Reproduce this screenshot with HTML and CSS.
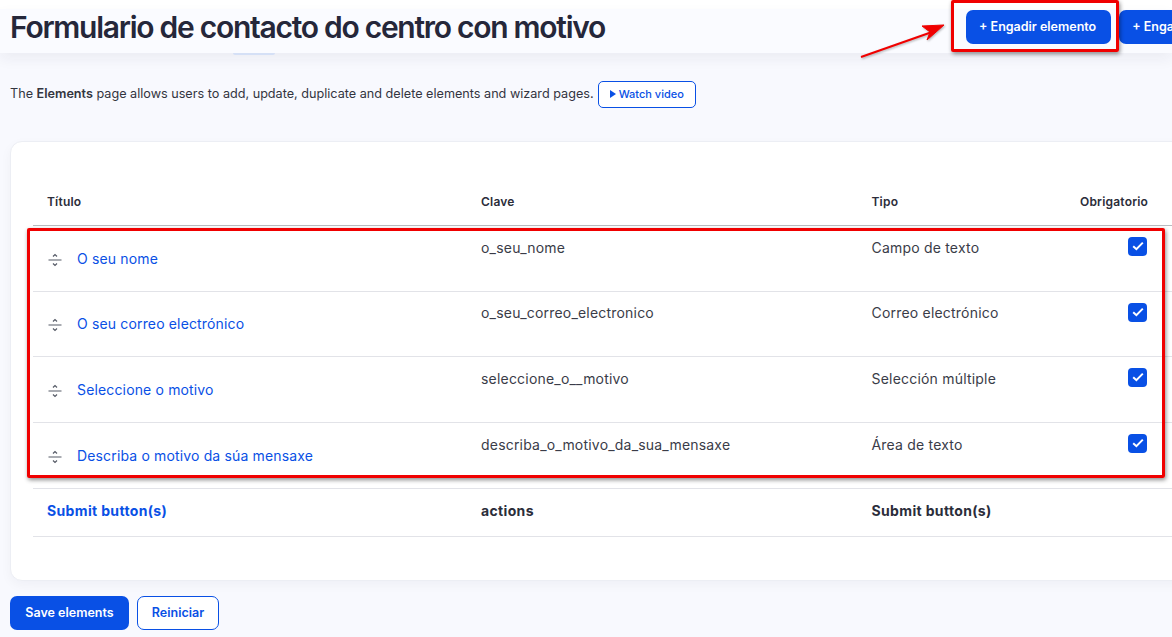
FILE: index.html
```html
<!DOCTYPE html>
<html>
    <head>
        <meta charset="UTF-8">
        <meta name="viewport" content="width=device-width, initial-scale=1.0">
        <title>Formulario de contacto do centro con motivo</title>
        <link rel="stylesheet" href="styles.css">
    </head>

    <body>
        <header class="page-header">
            <h1>Formulario de contacto do centro con motivo</h1>
            <div class="header-actions">
                <a class="btn btn-primary btn-add">+ Engadir elemento</a>
                <a class="btn btn-primary btn-add">+ Enga</a>
            </div>
            <span class="header-tab"></span>
        </header>

        <div class="intro">
            <p>The <b>Elements</b> page allows users to add, update, duplicate and delete elements and wizard pages.</p>
            <a class="btn-video"><span class="play"></span>Watch video</a>
        </div>

        <section class="card">
            <table class="elements">
                <thead>
                    <tr>
                        <th class="col-title">Título</th>
                        <th class="col-key">Clave</th>
                        <th class="col-type">Tipo</th>
                        <th class="col-req">Obrigatorio</th>
                    </tr>
                </thead>
                <tbody>
                    <tr>
                        <td class="title-cell">
                            <div class="title-wrap">
                                <svg class="handle" width="14" height="16" viewBox="0 0 14 16"><path d="M5 4.5 7 2.5 9 4.5M0.5 8h13M5 11.5 7 13.5 9 11.5" fill="none" stroke="#555a66" stroke-width="1.2"/></svg>
                                <a>O seu nome</a>
                            </div>
                        </td>
                        <td>o_seu_nome</td>
                        <td>Campo de texto</td>
                        <td class="req-cell"><span class="check"><svg width="12" height="10" viewBox="0 0 12 10"><path d="M1.2 5.2 4.4 8.2 10.8 1.6" fill="none" stroke="#fff" stroke-width="2"/></svg></span></td>
                    </tr>
                    <tr class="row-short">
                        <td class="title-cell">
                            <div class="title-wrap">
                                <svg class="handle" width="14" height="16" viewBox="0 0 14 16"><path d="M5 4.5 7 2.5 9 4.5M0.5 8h13M5 11.5 7 13.5 9 11.5" fill="none" stroke="#555a66" stroke-width="1.2"/></svg>
                                <a>O seu correo electrónico</a>
                            </div>
                        </td>
                        <td>o_seu_correo_electronico</td>
                        <td>Correo electrónico</td>
                        <td class="req-cell"><span class="check"><svg width="12" height="10" viewBox="0 0 12 10"><path d="M1.2 5.2 4.4 8.2 10.8 1.6" fill="none" stroke="#fff" stroke-width="2"/></svg></span></td>
                    </tr>
                    <tr>
                        <td class="title-cell">
                            <div class="title-wrap">
                                <svg class="handle" width="14" height="16" viewBox="0 0 14 16"><path d="M5 4.5 7 2.5 9 4.5M0.5 8h13M5 11.5 7 13.5 9 11.5" fill="none" stroke="#555a66" stroke-width="1.2"/></svg>
                                <a>Seleccione o motivo</a>
                            </div>
                        </td>
                        <td>seleccione_o__motivo</td>
                        <td>Selección múltiple</td>
                        <td class="req-cell"><span class="check"><svg width="12" height="10" viewBox="0 0 12 10"><path d="M1.2 5.2 4.4 8.2 10.8 1.6" fill="none" stroke="#fff" stroke-width="2"/></svg></span></td>
                    </tr>
                    <tr>
                        <td class="title-cell">
                            <div class="title-wrap">
                                <svg class="handle" width="14" height="16" viewBox="0 0 14 16"><path d="M5 4.5 7 2.5 9 4.5M0.5 8h13M5 11.5 7 13.5 9 11.5" fill="none" stroke="#555a66" stroke-width="1.2"/></svg>
                                <a>Describa o motivo da súa mensaxe</a>
                            </div>
                        </td>
                        <td>describa_o_motivo_da_sua_mensaxe</td>
                        <td>Área de texto</td>
                        <td class="req-cell"><span class="check"><svg width="12" height="10" viewBox="0 0 12 10"><path d="M1.2 5.2 4.4 8.2 10.8 1.6" fill="none" stroke="#fff" stroke-width="2"/></svg></span></td>
                    </tr>
                    <tr class="row-submit">
                        <td><a>Submit button(s)</a></td>
                        <td>actions</td>
                        <td>Submit button(s)</td>
                        <td></td>
                    </tr>
                </tbody>
            </table>
        </section>

        <div class="form-actions">
            <a class="btn btn-primary btn-save">Save elements</a>
            <a class="btn btn-outline">Reiniciar</a>
        </div>

        <!-- annotations drawn over the screenshot -->
        <div class="mark mark-button"></div>
        <div class="mark mark-rows"></div>
        <svg class="arrow" width="100" height="50" viewBox="0 0 100 50">
            <path d="M1 37 72 12" stroke="#f00000" stroke-width="2" fill="none"/>
            <path d="M84 5 62 6 70 12 67 20Z" fill="#f00000" stroke="#f00000"/>
        </svg>
    </body>
</html>
```

FILE: styles.css
```css
body {
    font-family: 'Inter', 'Liberation Sans', sans-serif;
    background: #f8f9fe;
    color: #2b2d3a;
    margin: 0;
    padding: 0;
    width: 1172px;
    height: 637px;
    overflow: hidden;
    position: relative;
    font-size: 14px;
}
a {
    color: #0950e5;
    text-decoration: none;
}
body::before {
    content: "";
    display: block;
    height: 9px;
    background: #fff;
}
.page-header {
    height: 44px;
    display: flex;
    justify-content: space-between;
    background: #fafbff;
    box-shadow: 0 6px 14px rgba(30, 35, 60, 0.06);
    position: relative;
    padding-left: 10px;
}
.page-header h1 {
    margin: 0;
    font-size: 30px;
    line-height: 37px;
    font-weight: 600;
    letter-spacing: -1.27px;
    color: #25273a;
    white-space: nowrap;
}
.header-tab {
    position: absolute;
    left: 233px;
    top: 44px;
    width: 42px;
    height: 2px;
    border-radius: 0 0 4px 4px;
    background: #d5e0f6;
}
.header-actions {
    display: flex;
    gap: 8px;
    flex: none;
    width: 206px;
    margin-top: 1px;
    overflow: hidden;
    white-space: nowrap;
}
.btn {
    display: inline-flex;
    align-items: center;
    justify-content: center;
    box-sizing: border-box;
    border-radius: 7px;
    font-weight: 600;
    font-size: 13px;
    padding-bottom: 1px;
    white-space: nowrap;
}
.btn-primary {
    background: #0950e5;
    color: #fff;
}
.btn-add {
    height: 34px;
    padding: 0 15px 2px 13px;
    flex: none;
    font-size: 12.5px;
}
.intro {
    margin: 28px 0 0 10px;
    height: 27px;
    display: flex;
    align-items: center;
    gap: 4px;
    font-size: 12.65px;
    color: #33353f;
    white-space: nowrap;
}
.intro p {
    margin: 0 0 3px;
}
.intro b {
    font-weight: 600;
}
.btn-video {
    display: inline-flex;
    align-items: center;
    box-sizing: border-box;
    height: 27px;
    width: 98px;
    padding: 0 0 2px 11px;
    background: #fff;
    border: 1px solid #0950e5;
    border-radius: 5px;
    font-size: 11px;
    font-weight: 500;
}
.play {
    width: 0;
    height: 0;
    margin-right: 3px;
    border-left: 6px solid #0950e5;
    border-top: 4px solid transparent;
    border-bottom: 4px solid transparent;
}
.card {
    box-sizing: border-box;
    margin: 33px 0 0 10px;
    width: 1200px;
    height: 440px;
    padding: 30px 0 0 22px;
    background: #fff;
    border: 1px solid #eceef4;
    border-radius: 12px;
    box-shadow: 0 4px 12px rgba(30, 35, 60, 0.04);
}
.elements {
    border-collapse: collapse;
    table-layout: fixed;
    width: 1160px;
}
.elements th {
    text-align: left;
    font-size: 12px;
    font-weight: 600;
    letter-spacing: 0.2px;
    height: 53px;
    padding: 7px 0 0 14px;
    box-sizing: border-box;
    border-bottom: 1px solid #b9bbc0;
    color: #2b2d3a;
    vertical-align: middle;
}
.col-title { width: 434px; }
.col-key { width: 390.5px; }
.col-type { width: 208.5px; }
.elements td {
    box-sizing: border-box;
    height: 66px;
    padding: 13px 0 0 14px;
    vertical-align: top;
    line-height: 17px;
    letter-spacing: 0.2px;
    border-bottom: 1px solid #e2e3e8;
    color: #3a3c48;
}
.elements td.title-cell {
    padding-top: 24px;
    letter-spacing: 0.15px;
}
.elements .row-short td {
    height: 65px;
    padding-top: 12px;
}
.elements .row-short td.title-cell {
    padding-top: 23px;
}
.title-wrap {
    display: flex;
    align-items: center;
    gap: 15px;
}
.handle {
    flex: none;
    margin: 2px 0 0 1px;
}
.elements td.req-cell {
    padding: 11px 0 0 62px;
}
.elements .row-short td.req-cell {
    padding-top: 11px;
}
.check {
    display: flex;
    align-items: center;
    justify-content: center;
    width: 19px;
    height: 19px;
    border-radius: 4px;
    background: #0950e5;
}
.elements .row-submit td {
    height: 48px;
    padding-top: 13px;
    font-weight: 700;
    letter-spacing: 0.35px;
    color: #2b2d3a;
}
.form-actions {
    display: flex;
    gap: 8px;
    margin: 15px 0 0 10px;
}
.btn-save {
    width: 119px;
    height: 34px;
    font-size: 12.5px;
}
.btn-outline {
    width: 82px;
    height: 34px;
    background: #fff;
    border: 1px solid #0950e5;
    color: #0950e5;
    font-size: 12.5px;
}
.mark {
    position: absolute;
    box-sizing: border-box;
    border: 3px solid #f00000;
    border-radius: 2px;
    box-shadow: 1px 2px 4px rgba(0, 0, 0, 0.45);
}
.mark-button {
    left: 951px;
    top: 0;
    width: 168px;
    height: 52px;
}
.mark-rows {
    left: 27px;
    top: 228px;
    width: 1138px;
    height: 250px;
}
.arrow {
    position: absolute;
    left: 860px;
    top: 20px;
    filter: drop-shadow(1px 1px 1px rgba(0, 0, 0, 0.3));
}
```
